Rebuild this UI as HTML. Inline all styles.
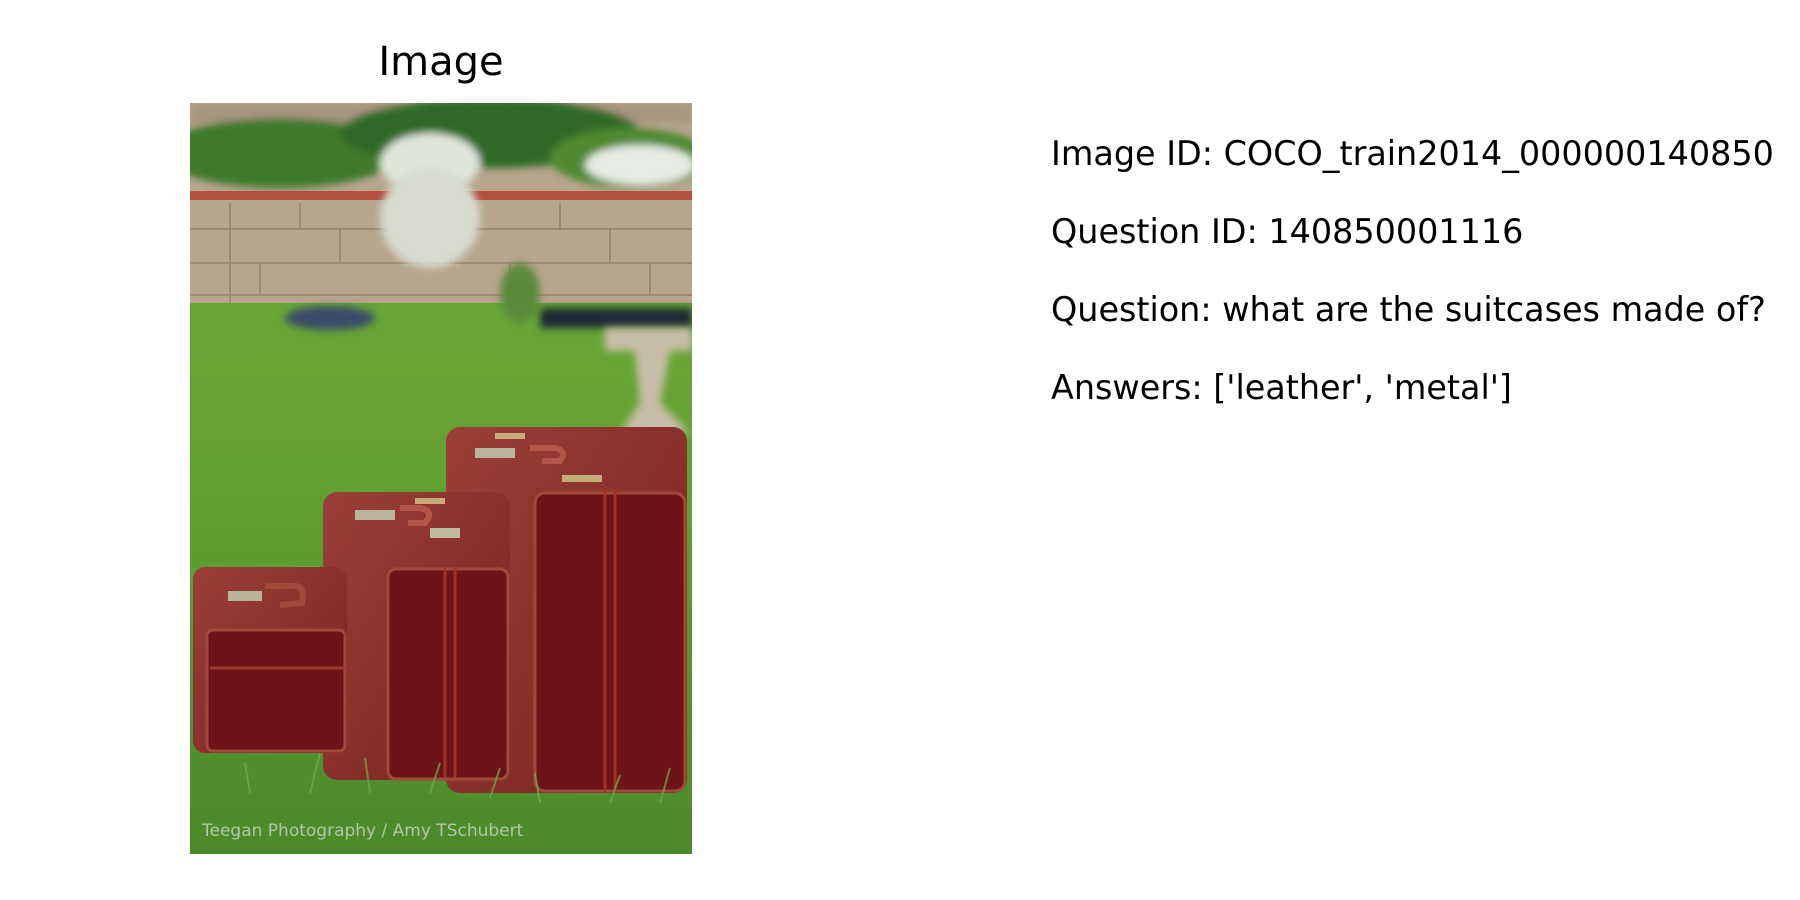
<!DOCTYPE html>
<html><head><meta charset="utf-8"><style>
html,body{margin:0;padding:0;background:#fff;width:1800px;height:900px;overflow:hidden}
.t{position:absolute;font-family:"DejaVu Sans","Liberation Sans",sans-serif;color:#000;white-space:nowrap}
</style></head><body>
<div class="t" style="left:0;width:882px;text-align:center;top:38px;font-size:40px;line-height:48px">Image</div>
<div class="t" style="left:1051px;top:130px;font-size:33.4px;line-height:48px">Image ID: COCO_train2014_000000140850</div>
<div class="t" style="left:1051px;top:208px;font-size:33.4px;line-height:48px">Question ID: 140850001116</div>
<div class="t" style="left:1051px;top:286px;font-size:33.4px;line-height:48px">Question: what are the suitcases made of?</div>
<div class="t" style="left:1051px;top:364px;font-size:33.4px;line-height:48px">Answers: ['leather', 'metal']</div>
<svg style="position:absolute;left:190px;top:103px" width="502" height="751" viewBox="0 0 502 751">
<defs>
<linearGradient id="lawn" x1="0" y1="0" x2="0" y2="1"><stop offset="0" stop-color="#6fa83a"/><stop offset="0.5" stop-color="#62a232"/><stop offset="1" stop-color="#4a8a2a"/></linearGradient>
<linearGradient id="top" x1="0" y1="0" x2="1" y2="1"><stop offset="0" stop-color="#9a3f38"/><stop offset="1" stop-color="#7a2222"/></linearGradient>
<filter id="bl"><feGaussianBlur stdDeviation="4"/></filter>
</defs>
<rect width="502" height="751" fill="url(#lawn)"/>
<rect width="502" height="200" fill="#b7a58e"/>
<g stroke="#9c8a74" stroke-width="2" fill="none">
<path d="M0 126H502M0 160H502M0 192H502M40 100V200M110 100V126M150 126V160M70 160V192M210 100V126M260 126V160M320 160V192M370 100V126M420 126V160M460 160V192"/>
</g>
<g filter="url(#bl)">
<rect x="0" y="0" width="502" height="20" fill="#a89580"/>
<ellipse cx="90" cy="50" rx="120" ry="35" fill="#3d7a2a"/>
<ellipse cx="300" cy="30" rx="150" ry="35" fill="#2f6a28"/>
<ellipse cx="440" cy="55" rx="80" ry="30" fill="#4f8a30"/>
<ellipse cx="240" cy="60" rx="50" ry="30" fill="#dfe6d8"/>
<ellipse cx="450" cy="62" rx="55" ry="20" fill="#e6ebe3"/>
<ellipse cx="140" cy="215" rx="45" ry="12" fill="#3a4c6a"/>
<rect x="350" y="205" width="152" height="20" fill="#1e2a36"/>
<ellipse cx="330" cy="190" rx="20" ry="30" fill="#5c8a3a"/>
</g>
<rect x="0" y="88" width="502" height="9" fill="#b4503f"/>
<ellipse cx="240" cy="115" rx="50" ry="50" fill="#d7dccc" filter="url(#bl)"/>
<g filter="url(#bl)"><path d="M415 225H502V248H480L470 300L500 330H430L450 300L445 248H415Z" fill="#c8bda8"/></g>
<!-- large -->
<rect x="256" y="324" width="241" height="366" rx="14" fill="url(#top)"/>
<rect x="345" y="390" width="150" height="298" rx="10" fill="#6d1418" stroke="#a04a3c" stroke-width="3"/>
<path d="M415 387V690M425 387V690" stroke="#a03228" stroke-width="3"/>
<rect x="285" y="345" width="40" height="10" fill="#b8b59c"/>
<rect x="285" y="390" width="12" height="45" fill="#c3b68a"/>
<path d="M340 345H365Q378 348 370 358H352" stroke="#b25748" stroke-width="6" fill="none"/>
<rect x="305" y="330" width="30" height="6" fill="#c3ae7a"/>
<rect x="372" y="372" width="40" height="7" fill="#c3ae7a"/>
<!-- medium -->
<rect x="133" y="389" width="187" height="288" rx="14" fill="url(#top)"/>
<rect x="198" y="466" width="120" height="210" rx="8" fill="#6d1418" stroke="#a04a3c" stroke-width="3"/>
<path d="M255 464V675M265 464V675" stroke="#a03228" stroke-width="3"/>
<rect x="165" y="407" width="40" height="10" fill="#b8b59c"/>
<rect x="240" y="425" width="30" height="10" fill="#c0b9a0"/>
<path d="M210 405H230Q245 408 235 420L218 420" stroke="#b25748" stroke-width="6" fill="none"/>
<rect x="225" y="395" width="30" height="6" fill="#c3ae7a"/>
<!-- small -->
<rect x="3" y="464" width="154" height="186" rx="12" fill="url(#top)"/>
<rect x="17" y="527" width="138" height="121" rx="6" fill="#6e1418" stroke="#a04a3c" stroke-width="3"/>
<path d="M20 565H155" stroke="#9a3a30" stroke-width="3"/>
<path d="M75 483H105Q115 483 112 500L90 502" stroke="#a1493a" stroke-width="6" fill="none"/>
<rect x="38" y="488" width="34" height="10" fill="#b7b49a"/>
<g stroke="#6fb048" stroke-width="2" opacity="0.7">
<path d="M120 690L130 650M180 690L175 655M240 690L250 660M300 695L310 665M350 700L345 670M420 700L430 672M470 700L480 665M60 690L55 660"/>
</g>
<text x="12" y="733" font-family="DejaVu Sans,sans-serif" font-size="17" fill="#c8d0c0" opacity="0.85">Teegan Photography / Amy TSchubert</text>
</svg>
</body></html>
